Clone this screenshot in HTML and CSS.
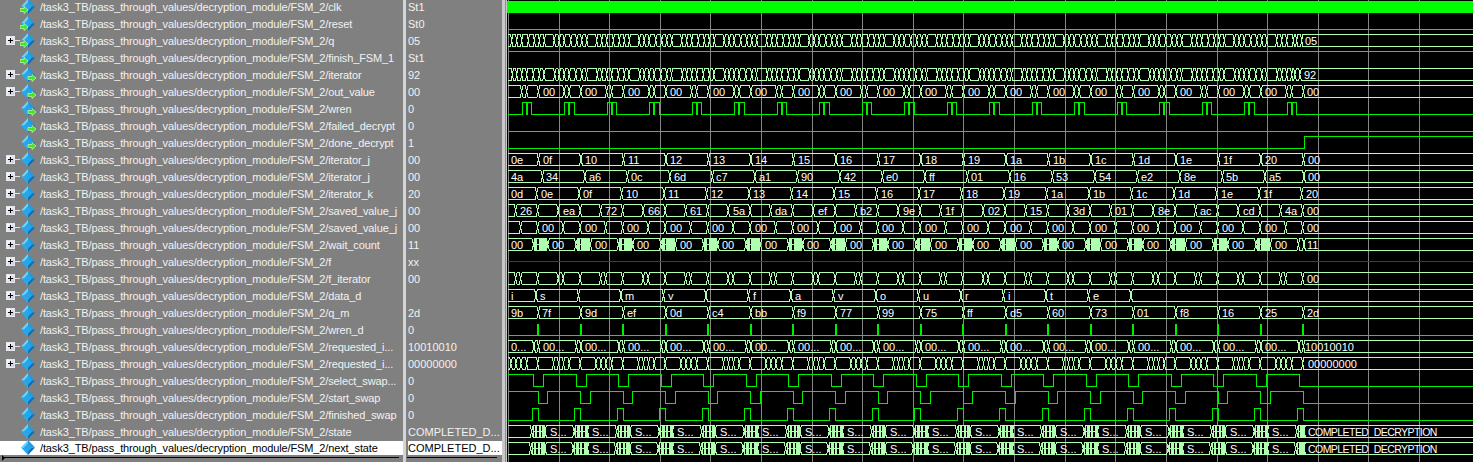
FILE: index.html
```html
<!DOCTYPE html>
<html lang="en">
<head>
<meta charset="utf-8">
<title>Wave</title>
<link rel="stylesheet" href="styles.css">
</head>
<body>
<svg class="defs" width="0" height="0" aria-hidden="true">
  <defs>
    <g id="diamond">
      <polygon points="8,0 8,7.5 1,7.5" fill="#6fd4f7"/>
      <polygon points="8,0 15,7.5 8,7.5" fill="#1f9be0"/>
      <polygon points="1,7.5 8,7.5 8,15" fill="#2aa9ea"/>
      <polygon points="15,7.5 8,7.5 8,15" fill="#0a6fb8"/>
      <polygon points="8,3 12,7.5 8,12 4,7.5" fill="#25a6ea"/>
    </g>
    <symbol id="sig" viewBox="0 0 16 16"><use href="#diamond"/></symbol>
    <symbol id="sig-in" viewBox="0 0 16 16">
      <use href="#diamond"/>
      <polygon points="0,9.5 4,9.5 4,7.5 8,11 4,14.5 4,12.5 0,12.5" fill="#3fe62a" stroke="#f4ffb0" stroke-width=".6"/>
    </symbol>
    <symbol id="sig-out" viewBox="0 0 16 16">
      <use href="#diamond"/>
      <polygon points="8,9.5 12,9.5 12,7.5 16,11 12,14.5 12,12.5 8,12.5" fill="#3fe62a" stroke="#f4ffb0" stroke-width=".6"/>
    </symbol>
  </defs>
</svg>
<main class="window">
  <section class="names">
    <div class="row"><span class="noexp"></span><svg class="icon"><use href="#sig-in"/></svg><span class="name">/task3_TB/pass_through_values/decryption_module/FSM_2/clk</span></div>
    <div class="row"><span class="noexp"></span><svg class="icon"><use href="#sig-in"/></svg><span class="name">/task3_TB/pass_through_values/decryption_module/FSM_2/reset</span></div>
    <div class="row"><span class="exp"></span><svg class="icon"><use href="#sig-in"/></svg><span class="name">/task3_TB/pass_through_values/decryption_module/FSM_2/q</span></div>
    <div class="row"><span class="noexp"></span><svg class="icon"><use href="#sig-in"/></svg><span class="name">/task3_TB/pass_through_values/decryption_module/FSM_2/finish_FSM_1</span></div>
    <div class="row"><span class="exp"></span><svg class="icon"><use href="#sig-out"/></svg><span class="name">/task3_TB/pass_through_values/decryption_module/FSM_2/iterator</span></div>
    <div class="row"><span class="exp"></span><svg class="icon"><use href="#sig-out"/></svg><span class="name">/task3_TB/pass_through_values/decryption_module/FSM_2/out_value</span></div>
    <div class="row"><span class="noexp"></span><svg class="icon"><use href="#sig-out"/></svg><span class="name">/task3_TB/pass_through_values/decryption_module/FSM_2/wren</span></div>
    <div class="row"><span class="noexp"></span><svg class="icon"><use href="#sig-out"/></svg><span class="name">/task3_TB/pass_through_values/decryption_module/FSM_2/failed_decrypt</span></div>
    <div class="row"><span class="noexp"></span><svg class="icon"><use href="#sig-out"/></svg><span class="name">/task3_TB/pass_through_values/decryption_module/FSM_2/done_decrypt</span></div>
    <div class="row"><span class="exp"></span><svg class="icon"><use href="#sig"/></svg><span class="name">/task3_TB/pass_through_values/decryption_module/FSM_2/iterator_j</span></div>
    <div class="row"><span class="exp"></span><svg class="icon"><use href="#sig"/></svg><span class="name">/task3_TB/pass_through_values/decryption_module/FSM_2/iterator_j</span></div>
    <div class="row"><span class="exp"></span><svg class="icon"><use href="#sig"/></svg><span class="name">/task3_TB/pass_through_values/decryption_module/FSM_2/iterator_k</span></div>
    <div class="row"><span class="exp"></span><svg class="icon"><use href="#sig"/></svg><span class="name">/task3_TB/pass_through_values/decryption_module/FSM_2/saved_value_j</span></div>
    <div class="row"><span class="exp"></span><svg class="icon"><use href="#sig"/></svg><span class="name">/task3_TB/pass_through_values/decryption_module/FSM_2/saved_value_j</span></div>
    <div class="row"><span class="exp"></span><svg class="icon"><use href="#sig"/></svg><span class="name">/task3_TB/pass_through_values/decryption_module/FSM_2/wait_count</span></div>
    <div class="row"><span class="exp"></span><svg class="icon"><use href="#sig"/></svg><span class="name">/task3_TB/pass_through_values/decryption_module/FSM_2/f</span></div>
    <div class="row"><span class="exp"></span><svg class="icon"><use href="#sig"/></svg><span class="name">/task3_TB/pass_through_values/decryption_module/FSM_2/f_iterator</span></div>
    <div class="row"><span class="exp"></span><svg class="icon"><use href="#sig"/></svg><span class="name">/task3_TB/pass_through_values/decryption_module/FSM_2/data_d</span></div>
    <div class="row"><span class="exp"></span><svg class="icon"><use href="#sig"/></svg><span class="name">/task3_TB/pass_through_values/decryption_module/FSM_2/q_m</span></div>
    <div class="row"><span class="noexp"></span><svg class="icon"><use href="#sig"/></svg><span class="name">/task3_TB/pass_through_values/decryption_module/FSM_2/wren_d</span></div>
    <div class="row"><span class="exp"></span><svg class="icon"><use href="#sig"/></svg><span class="name">/task3_TB/pass_through_values/decryption_module/FSM_2/requested_i...</span></div>
    <div class="row"><span class="exp"></span><svg class="icon"><use href="#sig"/></svg><span class="name">/task3_TB/pass_through_values/decryption_module/FSM_2/requested_i...</span></div>
    <div class="row"><span class="noexp"></span><svg class="icon"><use href="#sig"/></svg><span class="name">/task3_TB/pass_through_values/decryption_module/FSM_2/select_swap...</span></div>
    <div class="row"><span class="noexp"></span><svg class="icon"><use href="#sig"/></svg><span class="name">/task3_TB/pass_through_values/decryption_module/FSM_2/start_swap</span></div>
    <div class="row"><span class="noexp"></span><svg class="icon"><use href="#sig"/></svg><span class="name">/task3_TB/pass_through_values/decryption_module/FSM_2/finished_swap</span></div>
    <div class="row"><span class="noexp"></span><svg class="icon"><use href="#sig"/></svg><span class="name">/task3_TB/pass_through_values/decryption_module/FSM_2/state</span></div>
    <div class="row selected"><span class="noexp"></span><svg class="icon"><use href="#sig"/></svg><span class="name">/task3_TB/pass_through_values/decryption_module/FSM_2/next_state</span></div>
    <div class="cursor-line names-line"><span class="cursor-mark"></span></div>
  </section>
  <div class="splitter"></div>
  <section class="values">
    <div class="row">St1</div>
    <div class="row">St0</div>
    <div class="row">05</div>
    <div class="row">St1</div>
    <div class="row">92</div>
    <div class="row">00</div>
    <div class="row">0</div>
    <div class="row">0</div>
    <div class="row">1</div>
    <div class="row">00</div>
    <div class="row">00</div>
    <div class="row">20</div>
    <div class="row">00</div>
    <div class="row">00</div>
    <div class="row">11</div>
    <div class="row">xx</div>
    <div class="row">00</div>
    <div class="row"></div>
    <div class="row">2d</div>
    <div class="row">0</div>
    <div class="row">10010010</div>
    <div class="row">00000000</div>
    <div class="row">0</div>
    <div class="row">0</div>
    <div class="row">0</div>
    <div class="row">COMPLETED_D...</div>
    <div class="row selected">COMPLETED_D...</div>
    <div class="cursor-line values-line"></div>
  </section>
  <div class="splitter wide"></div>
  <svg id="wave" class="wave" viewBox="507 0 966 462" width="966" height="462"></svg>
</main>
<script src="wave.js"></script>
</body>
</html>
```
FILE: styles.css
```css
html, body {
  margin: 0;
  padding: 0;
  height: 100%;
  overflow: hidden;
  background: #808080;
}
.defs { position: absolute; }
.window {
  display: flex;
  width: 1473px;
  height: 462px;
  overflow: hidden;
  font-family: "Liberation Sans", Arial, sans-serif;
  font-size: 11px;
  color: #f2f2f2;
}
.names { width: 403px; flex: none; margin-top: -2px; }
.values { width: 96px; flex: none; margin-top: -2px; }
.splitter { width: 3px; flex: none; background: #d4d4d4; }
.splitter.wide { width: 5px; background: linear-gradient(to right, #c8c8c8 0 3px, #8c8c8c 3px 4px, #c8c8c8 4px); }
.row {
  display: flex;
  align-items: center;
  height: 17px;
  box-sizing: border-box;
  white-space: nowrap;
}
.values .row { padding-left: 2px; }
.row.selected {
  padding-top: 1px;
  padding-bottom: 2px;
  background: #fff;
  background-clip: content-box;
  color: #000;
}
.exp, .noexp { flex: none; width: 9px; height: 9px; margin: 0 5px 0 6px; position: relative; box-sizing: border-box; }
.exp {
  background:
    linear-gradient(#000, #000) center / 5px 1px no-repeat,
    linear-gradient(#000, #000) center / 1px 5px no-repeat,
    linear-gradient(135deg, #fff, #c4cbe0);
  border: 1px solid #e8e8f0;
}
.exp::after {
  content: "";
  position: absolute;
  left: 100%;
  top: 3px;
  width: 6px;
  height: 1px;
  background: #e4e4e4;
}
.icon { flex: none; width: 16px; height: 16px; margin-right: 4px; position: relative; }
.name { letter-spacing: -0.12px; }
.cursor-line { height: 1px; background: #000; position: relative; }
.names-line { margin-left: 2px; margin-right: 4px; }
.values-line { margin-left: 1px; margin-right: 5px; }
.cursor-mark {
  position: absolute;
  left: 0;
  top: -2px;
  border-left: 3px solid #000;
  border-top: 3px solid transparent;
  border-bottom: 3px solid transparent;
}
.wave { flex: none; background: #000; display: block; }
.wave text {
  font-family: "Liberation Sans", Arial, sans-serif;
  font-size: 11px;
  fill: #fff;
}
.wave text.long { font-size: 10.5px; letter-spacing: -0.55px; }
.grid { stroke: #858585; stroke-width: 1; shape-rendering: crispEdges; }
.bit { stroke: #00ee00; stroke-width: 1; fill: none; shape-rendering: crispEdges; }
.bus { stroke: #b0ffb0; stroke-width: 1; fill: none; shape-rendering: crispEdges; }
.clk { fill: #00ff00; }
.red { stroke: #d00000; stroke-width: 1; shape-rendering: crispEdges; }
.thick { fill: #00ee00; }
.hash { fill: #b0ffb0; shape-rendering: crispEdges; }
.hole { fill: #000; shape-rendering: crispEdges; }
```
FILE: wave.js
```js
(function () {
  var NS = 'http://www.w3.org/2000/svg';
  var svg = document.getElementById('wave');
  var END = 1473, START = 507.5, P = 42.5, PITCH = 17;

  function el(name, attrs, text) {
    var e = document.createElementNS(NS, name);
    for (var k in attrs) e.setAttribute(k, attrs[k]);
    if (text !== undefined) e.textContent = text;
    svg.appendChild(e);
    return e;
  }
  function seq(x, n) {
    var out = [];
    for (var i = 0; i < n; i++) out.push(x + P * i);
    return out;
  }
  function many(offsets, n) {
    var out = [];
    offsets.forEach(function (o) { out = out.concat(seq(o, n)); });
    return out.sort(function (a, b) { return a - b; });
  }
  function top(r) { return PITCH * r + 0.5; }
  function bot(r) { return PITCH * r + 12.5; }

  // vertical grid
  for (var g = 0; g < 19; g++) {
    var gx = Math.round(508 + 50.61 * g) + 0.5;
    el('line', { x1: gx, x2: gx, y1: 0, y2: 462, 'class': 'grid' });
  }

  // clip regions so labels are cut at the bus edges, as in the waveform
  var defs = el('defs', {});
  for (var c = 0; c < 27; c++) {
    var cp = document.createElementNS(NS, 'clipPath');
    cp.setAttribute('id', 'clip' + c);
    var cr = document.createElementNS(NS, 'rect');
    cr.setAttribute('x', 507);
    cr.setAttribute('y', PITCH * c + 1);
    cr.setAttribute('width', 966);
    cr.setAttribute('height', 10);
    cp.appendChild(cr);
    defs.appendChild(cp);
  }

  function bus(r, ts, labels, halfWidth) {
    var hw = halfWidth || 1.5;
    var a = top(r), b = bot(r);
    var p1 = 'M' + START + ' ' + a, p2 = 'M' + START + ' ' + b;
    var up = true;
    ts.forEach(function (t) {
      var y1 = up ? a : b, y2 = up ? b : a;
      p1 += 'L' + (t - hw) + ' ' + y1 + 'L' + (t + hw) + ' ' + y2;
      p2 += 'L' + (t - hw) + ' ' + y2 + 'L' + (t + hw) + ' ' + y1;
      up = !up;
    });
    p1 += 'L' + END + ' ' + (up ? a : b);
    p2 += 'L' + END + ' ' + (up ? b : a);
    el('path', { d: p1 + p2, 'class': 'bus' });
    (labels || []).forEach(function (l) { label(r, l[0], l[1]); });
  }
  function label(r, x, s, cls) {
    var attrs = { x: Math.round(x), y: PITCH * r + 11, 'clip-path': 'url(#clip' + r + ')' };
    if (cls) attrs['class'] = cls;
    el('text', attrs, s);
  }
  function seqLabels(first, list, off) {
    return list.map(function (s, i) {
      return [i === 0 ? 511 : first + P * (i - 1) + off, s];
    });
  }
  function bit(r, startHigh, edges) {
    var a = top(r), b = bot(r);
    var high = startHigh;
    var d = 'M' + START + ' ' + (high ? a : b);
    edges.forEach(function (t) {
      t = Math.round(t) + 0.5;
      d += 'L' + t + ' ' + (high ? a : b);
      high = !high;
      d += 'L' + t + ' ' + (high ? a : b);
    });
    d += 'L' + END + ' ' + (high ? a : b);
    el('path', { d: d, 'class': 'bit' });
  }
  function hash(r, x, w, gaps) {
    var y = PITCH * r;
    el('rect', { x: x, y: y, width: w, height: 13, 'class': 'hash' });
    // dark gaps that leave the crossing strokes visible
    gaps.forEach(function (h) {
      el('rect', { x: x + h[0], y: y + 1, width: h[1], height: 5, 'class': 'hole' });
      el('rect', { x: x + h[0], y: y + 7, width: h[1], height: 5, 'class': 'hole' });
    });
  }

  var i;

  // 0 clk
  el('rect', { x: 507, y: 1, width: 966, height: 12, 'class': 'clk' });
  // 1 reset
  bit(1, false, []);
  // 2 q
  var qT = many([511.7, 516.7, 521.7, 528.3, 534.3, 539.3, 544.3], 19).filter(function (t) { return t < 1295; });
  qT = qT.concat([1296.7, 1301.7]);
  bus(2, qT, [[1304.5, '05']], 1.25);
  // 3 finish
  bit(3, true, []);
  // 4 iterator
  var itT = many([512.3, 516.7, 521.7, 526.7, 533.3, 539.3, 544], 19).filter(function (t) { return t < 1293; });
  itT = itT.concat([1295, 1300]);
  bus(4, itT, [[1303.5, '92']], 1.25);
  // 5 out_value
  var ovL = seq(542.5, 18).map(function (x) { return [x, '00']; });
  ovL.push([1307, '00']);
  bus(5, many([521.7, 526.7, 538.3], 19), ovL);
  // 6 wren
  var wrenE = [];
  seq(521.5, 19).forEach(function (u) { wrenE.push(u, u + 4, u + 5, u + 9.7); });
  bit(6, false, wrenE);
  seq(521.5, 19).forEach(function (u) {
    el('rect', { x: Math.round(u + 4), y: 102, width: 2, height: 13, 'class': 'thick' });
  });
  // 7 failed_decrypt
  bit(7, false, []);
  // 8 done_decrypt
  bit(8, false, [1304]);

  // 9 iterator_j
  bus(9, seq(538.5, 19), seqLabels(538.5, ['0e', '0f', '10', '11', '12', '13', '14', '15', '16', '17', '18', '19', '1a', '1b', '1c', '1d', '1e', '1f', '20', '00'], 4));
  // 10 iterator_j
  var t10 = seq(542.3, 18).concat([1304]);
  var l10 = ['4a', '34', 'a6', '0c', '6d', 'c7', 'a1', '90', '42', 'e0', 'ff', '01', '16', '53', '54', 'e2', '8e', '5b', 'a5', '00'];
  bus(10, t10, l10.map(function (s, n) { return [n === 0 ? 511 : t10[n - 1] + 4, s]; }));
  // 11 iterator_k
  bus(11, seq(536.7, 19), seqLabels(536.7, ['0d', '0e', '0f', '10', '11', '12', '13', '14', '15', '16', '17', '18', '19', '1a', '1b', '1c', '1d', '1e', '1f', '20'], 4));
  // 12 saved_value_j
  var l12 = ['26', 'ea', '72', '66', '61', '5a', 'da', 'ef', 'b2', '9e', '1f', '02', '15', '3d', '01', '8e', 'ac', 'cd', '4a'];
  var lb12 = l12.map(function (s, n) { return [515.7 + P * n + 4.3, s]; });
  lb12.push([1307, '00']);
  bus(12, many([515.7, 537.7], 19), lb12);
  // 13 saved_value_j
  var lb13 = seq(537.7, 18).map(function (x) { return [x + 4.3, '00']; });
  lb13.push([1307, '00']);
  bus(13, many([520.7, 537.7], 19), lb13);
  // 14 wait_count
  var lb14 = [[511, '00']].concat(seq(552, 18).map(function (x) { return [x, '00']; }));
  lb14.push([1307, '11']);
  var t14 = [];
  seq(533.3, 19).forEach(function (x, n) {
    t14.push(x);
    if (n < 18) t14.push(x + 14.5);
  });
  t14.push(1304);
  bus(14, t14);
  seq(533.3, 18).forEach(function (x) { hash(14, x + 1, 13, [[3, 1.5]]); });
  lb14.forEach(function (l) { label(14, l[0], l[1]); });
  // 15 f
  el('line', { x1: START, x2: END, y1: 261.5, y2: 261.5, 'class': 'red' });
  // 16 f_iterator
  bus(16, many([515.7, 520.7, 537.7], 19), [[1307, '00']]);
  // 17 data_d
  bus(17, seq(536, 15));
  ['i', 's', '', 'm', 'y', '', 'f', 'a', 'v', 'o', 'u', 'r', 'i', 't', 'e'].forEach(function (s, n) {
    if (s) label(17, n === 0 ? 511 : 536 + P * (n - 1) + 4, s);
  });
  // 18 q_m
  bus(18, seq(538.3, 19), seqLabels(538.3, ['9b', '7f', '9d', 'ef', '0d', 'c4', 'bb', 'f9', '77', '99', '75', 'ff', 'd5', '60', '73', '01', 'f8', '16', '25', '2d'], 4));
  // 19 wren_d
  bit(19, false, []);
  seq(537.5, 19).forEach(function (x) {
    el('rect', { x: Math.round(x - 0.5), y: 324, width: 2, height: 12, 'class': 'thick' });
  });
  // 20 requested_i
  var lb20 = [[511, '0...']].concat(seq(542.5, 18).map(function (x) { return [x, '00...']; }));
  lb20.push([1304.5, '10010010']);
  bus(20, many([534, 538.5], 19), lb20);
  // 21 requested_i
  bus(21, many([511, 516, 521, 526.7, 537.7], 19), [[1307.5, '00000000']], 1.25);
  // 22 select_swap
  var e22 = [];
  for (i = 0; i < 18; i++) e22.push(533.3 + P * i, 543.3 + P * i);
  e22.push(1298.8);
  bit(22, true, e22);
  // 23 start_swap
  var e23 = [];
  for (i = 0; i < 18; i++) e23.push(537.5 + P * i, 547 + P * i);
  e23.push(1303);
  bit(23, true, e23);
  // 24 finished_swap
  var e24 = [];
  for (i = 0; i < 19; i++) e24.push(531.7 + P * i, 537.5 + P * i);
  bit(24, false, e24);
  // 25, 26 state / next_state
  [[25, 531.7], [26, 530.7]].forEach(function (cfg) {
    var r = cfg[0], a = cfg[1], w = 545 - a;
    var t = [];
    seq(a, 19).forEach(function (x, n) {
      t.push(x);
      if (n < 18) t.push(x + w);
    });
    t.push(1304);
    bus(r, t);
    seq(a, 19).forEach(function (x, n) {
      var wd = n < 18 ? w - 1 : 1304 - x;
      hash(r, x + 1, wd, n < 18 ? [[1, 1], [4.5, 1.5], [8, 1.5]] : [[1, 1]]);
    });
    seq(a + w, 18).forEach(function (x) { label(r, x + 4.5, 'S...'); });
    label(r, 1308, 'COMPLETED_DECRYPTION', 'long');
  });
})();
```
